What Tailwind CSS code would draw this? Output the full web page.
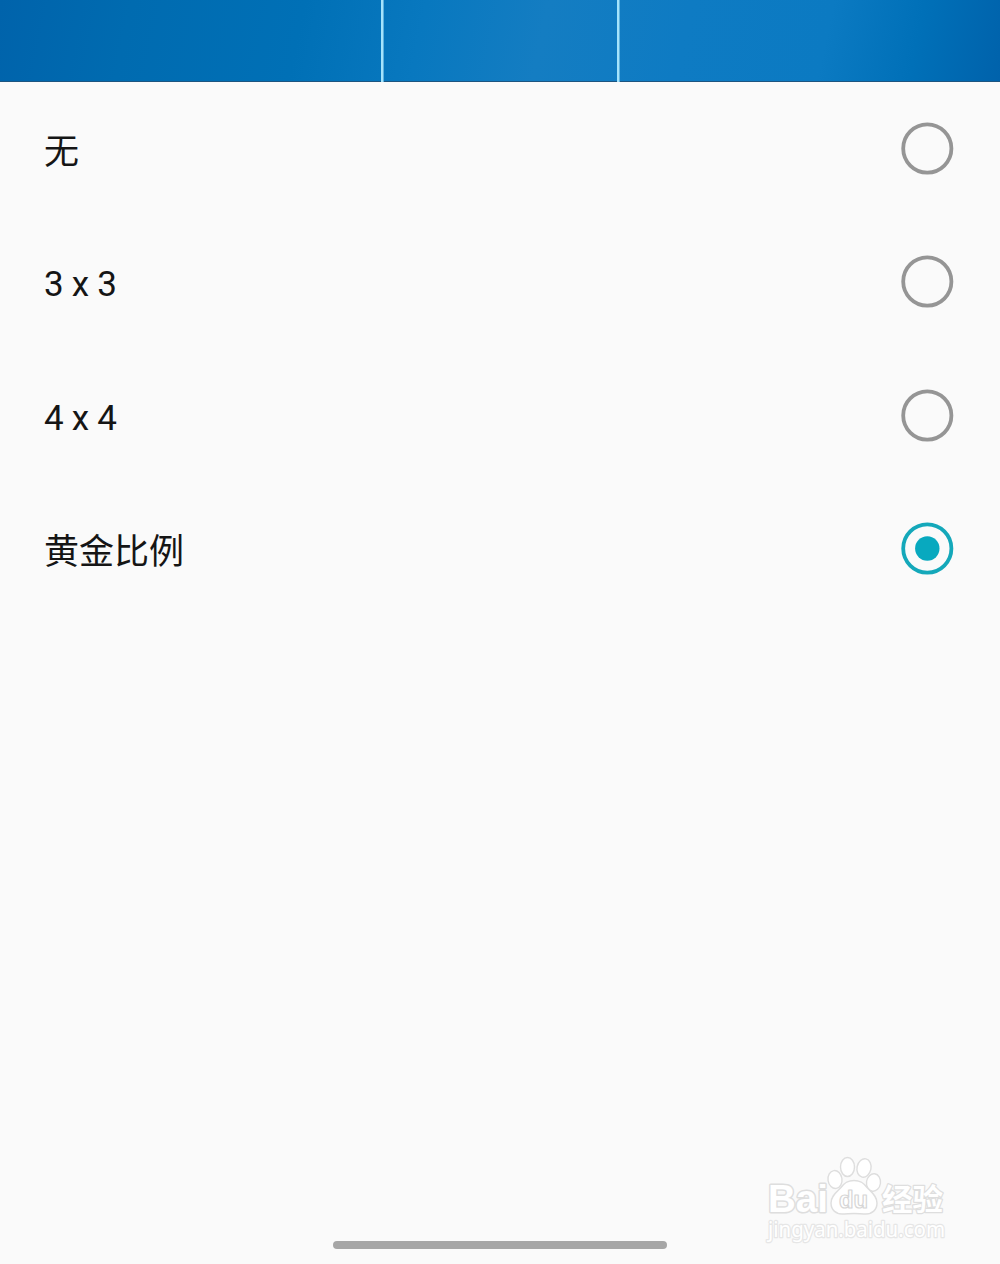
<!DOCTYPE html>
<html lang="zh-CN">
<head>
  <meta charset="UTF-8">
  <meta name="viewport" content="width=device-width, initial-scale=1.0">
  <title>参考线</title>
  <script src="https://cdn.jsdelivr.net/npm/@tailwindcss/browser@4"></script>
</head>

<body class="relative flex flex-col h-[1264px] overflow-hidden bg-[#fafafa] text-[#151515] font-['Roboto','Noto_Sans_CJK_SC',sans-serif]">
  <!-- Camera preview with golden ratio lines -->
  <header class="flex h-[82px] shrink-0 border-b border-[#1d5580] bg-[linear-gradient(102deg,#0063ab_0%,#006bb0_13%,#0070b6_30%,#0878bf_42%,#147dc2_54%,#0e7bc3_68%,#0b7ac2_82%,#0070b8_91%,#0062ab_100%)]">
    <div class="w-[383px] -mb-px border-r-2 border-[#a5e3fb] shadow-[1px_0_0_#5fb2de]"></div>
    <div class="w-[236px] -mb-px border-r-2 border-[#a5e3fb] shadow-[1px_0_0_#5fb2de]"></div>
  </header>

  <main class="flex flex-col text-[35px] leading-none">
    <label class="flex h-[133.33px] items-center justify-between pl-11 pr-[46px]">
      <span class="pt-[7px]">无</span>
      <svg class="size-[53px]" viewBox="0 0 53 53" fill="none"><circle cx="26.3" cy="26.5" r="24.1" stroke="#959595" stroke-width="3.8"/></svg>
    </label>
    <label class="flex h-[133.33px] items-center justify-between pl-11 pr-[46px]">
      <span class="pt-[6px] tracking-[-0.3px]">3 x 3</span>
      <svg class="size-[53px]" viewBox="0 0 53 53" fill="none"><circle cx="26.3" cy="26.5" r="24.1" stroke="#959595" stroke-width="3.8"/></svg>
    </label>
    <label class="flex h-[133.33px] items-center justify-between pl-11 pr-[46px]">
      <span class="pt-[7px] tracking-[-0.3px]">4 x 4</span>
      <svg class="size-[53px]" viewBox="0 0 53 53" fill="none"><circle cx="26.3" cy="26.5" r="24.1" stroke="#959595" stroke-width="3.8"/></svg>
    </label>
    <label class="flex h-[133.33px] items-center justify-between pl-11 pr-[46px]">
      <span class="pt-[7px]">黄金比例</span>
      <svg class="size-[53px]" viewBox="0 0 53 53" fill="none"><circle cx="26.3" cy="26.5" r="24.1" stroke="#14a8ba" stroke-width="3.8"/><circle cx="26.3" cy="26.5" r="12.2" fill="#08a9bf"/></svg>
    </label>
  </main>

  <!-- Gesture bar -->
  <div class="mt-auto mb-[15px] h-2 w-[334px] self-center rounded-full bg-[#a6a6a6]"></div>

  <!-- Watermark -->
  <svg class="absolute left-[755px] top-[1145px] h-[110px] w-[205px]" viewBox="0 0 205 110" fill="#fff" stroke="#dedede" stroke-width="1.4" stroke-linejoin="round">
    <text x="13" y="67" font-family="Liberation Sans, sans-serif" font-weight="700" font-size="39" textLength="60" lengthAdjust="spacingAndGlyphs" stroke-width="3" paint-order="stroke">Bai</text>
    <ellipse cx="80" cy="34.5" rx="7" ry="9" transform="rotate(-8 80 34.5)"/>
    <ellipse cx="92.5" cy="22" rx="7" ry="9.5"/>
    <ellipse cx="109" cy="23" rx="7" ry="9.3" transform="rotate(12 109 23)"/>
    <ellipse cx="118.5" cy="37.5" rx="7" ry="8.8" transform="rotate(8 118.5 37.5)"/>
    <path d="M99 35.500c-7 0-10 3-13 7-4 4.500-10 8-10 15.500 0 7 5 11 11 11 4 0 8-.5 12-.5s8 .5 12 .5c6 0 11-4 11-11 0-7.500-6-11-10-15.500-3-4-6-7-13-7z"/>
    <text x="84" y="63" font-family="Liberation Sans, sans-serif" font-weight="700" font-size="24" textLength="29" lengthAdjust="spacingAndGlyphs" stroke="#d6d6d6" stroke-width="1.2">du</text>
    <text x="127" y="65" font-family="Noto Sans CJK SC, sans-serif" font-weight="700" font-size="30" textLength="61" lengthAdjust="spacingAndGlyphs" stroke-width="2.5" paint-order="stroke">经验</text>
    <text x="13" y="91.5" font-family="Noto Sans, sans-serif" font-size="21" textLength="177" lengthAdjust="spacingAndGlyphs" stroke="#e6e6e6" stroke-width="2.5" paint-order="stroke">jingyan.baidu.com</text>
  </svg>
</body>
</html>
